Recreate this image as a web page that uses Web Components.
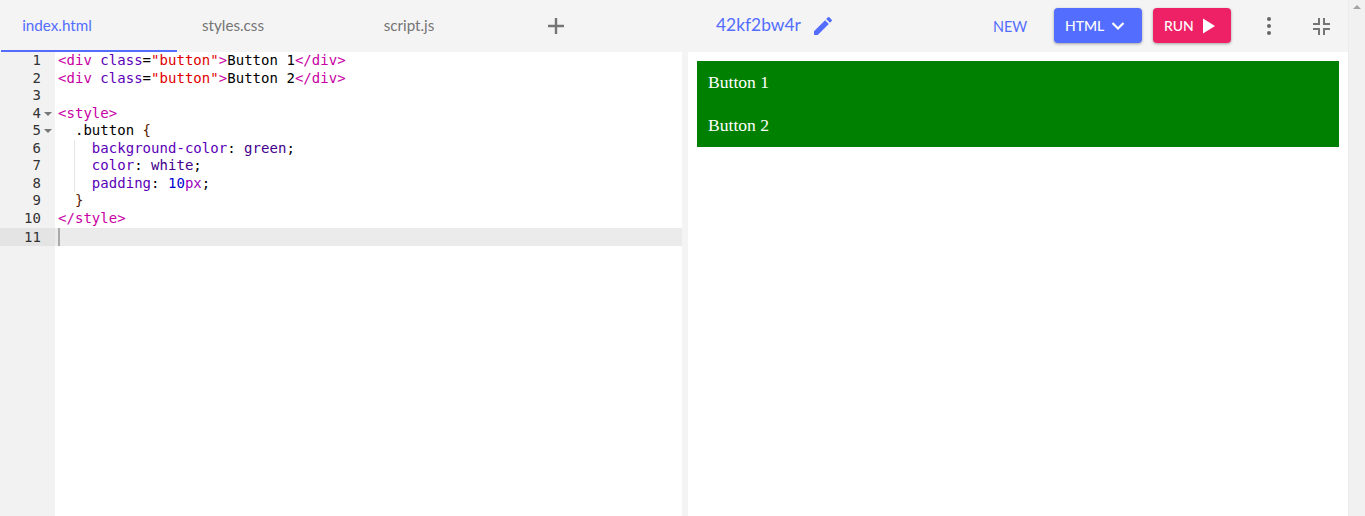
<!DOCTYPE html>
<html>
<head>
<meta charset="utf-8">
<style>
  html,body{margin:0;height:100%;overflow:hidden;background:#f4f4f4;}
</style>
</head>
<body>
<code-app></code-app>
<script>
class FileTab extends HTMLElement {
  constructor() {
    super();
    this.attachShadow({ mode: 'open' }).innerHTML = `
      <style>
        :host{display:flex;align-items:center;justify-content:center;width:176px;height:52px;box-sizing:border-box;
          font:15.2px Lato,sans-serif;color:#757575;padding:0 64px 2px 0;}
        :host([active]){color:#536dfe;border-bottom:2px solid #536dfe;padding-bottom:0;margin-left:1px;}
      </style>
      <slot></slot>`;
  }
}
customElements.define('file-tab', FileTab);

class TopBar extends HTMLElement {
  constructor() {
    super();
    this.attachShadow({ mode: 'open' }).innerHTML = `
      <style>
        :host{display:flex;align-items:center;height:52px;background:#f4f4f4;font-family:Lato,sans-serif;}
        svg{display:block;}
        .tabs{display:flex;width:536px;}
        .add{margin-left:10px;width:20px;height:20px;}
        .title{display:flex;align-items:center;margin-left:150px;font-size:17.4px;color:#536dfe;gap:12px;width:277px;}
        .title span{margin-bottom:3px;}
        .new{font-size:14.4px;color:#536dfe;width:61px;}
        .btn{display:flex;align-items:center;height:35px;border-radius:4px;color:#fff;font-size:14px;font-weight:500;box-sizing:border-box;
          box-shadow:0 1px 3px rgba(0,0,0,.35);margin-bottom:1px;}
        .html{background:#536dfe;width:88px;padding-left:11px;gap:6px;margin-right:11px;}
        .run{background:#ee2166;width:78px;padding-left:11px;gap:8px;}
        .more{margin-left:36px;}
        .shrink{margin-left:42px;}
      </style>
      <div class="tabs">
        <file-tab active>index.html</file-tab>
        <file-tab>styles.css</file-tab>
        <file-tab>script.js</file-tab>
      </div>
      <svg class="add" viewBox="0 0 20 20"><path d="M8.8 2h2.4v6.8H18v2.4h-6.8V18H8.8v-6.800H2V8.800h6.800z" fill="#757575"/></svg>
      <div class="title"><span>42kf2bw4r</span>
        <svg width="20" height="20" viewBox="2 2 20 20"><path fill="#536dfe" d="M3 17.25V21h3.75L17.81 9.94l-3.75-3.75L3 17.25zM20.71 7.04a1 1 0 0 0 0-1.41l-2.34-2.34a1 1 0 0 0-1.41 0l-1.83 1.83 3.75 3.75 1.83-1.83z"/></svg>
      </div>
      <div class="new">NEW</div>
      <div class="btn html">HTML
        <svg width="16" height="16" viewBox="0 0 16 16"><path d="M2.500 5 8 10.500 13.500 5" fill="none" stroke="#fff" stroke-width="2.200"/></svg>
      </div>
      <div class="btn run">RUN
        <svg width="14" height="16" viewBox="0 0 14 16"><path d="M1 .500l12 7.500-12 7.500z" fill="#fff"/></svg>
      </div>
      <svg class="more" width="4" height="18" viewBox="0 0 4 18"><circle cx="2" cy="2" r="2" fill="#666"/><circle cx="2" cy="9" r="2" fill="#666"/><circle cx="2" cy="16" r="2" fill="#666"/></svg>
      <svg class="shrink" width="17" height="17" viewBox="0 0 17 17"><path fill="#757575" d="M0 5h5V0h2v7H0zM10 0h2v5h5v2h-7zM0 10h7v7H5v-5H0zM10 10h7v2h-5v5h-2z"/></svg>`;
  }
}
customElements.define('top-bar', TopBar);

const CODE = [
  '<i class="t">&lt;div</i> <i class="a">class</i>=<i class="s">"button"</i><i class="t">&gt;</i>Button 1<i class="t">&lt;/div&gt;</i>',
  '<i class="t">&lt;div</i> <i class="a">class</i>=<i class="s">"button"</i><i class="t">&gt;</i>Button 2<i class="t">&lt;/div&gt;</i>',
  '',
  '<i class="t">&lt;style&gt;</i>',
  '  .button <i class="b">{</i>',
  '<u></u>    <i class="a">background-color</i>: <i class="v">green</i>;',
  '<u></u>    <i class="a">color</i>: <i class="v">white</i>;',
  '<u></u>    <i class="a">padding</i>: <i class="n">10</i><i class="p">px</i>;',
  '  <i class="b">}</i>',
  '<i class="t">&lt;/style&gt;</i>',
  ''
];

class CodeEditor extends HTMLElement {
  constructor() {
    super();
    const rows = CODE.map((c, i) => {
      const fold = (i === 3 || i === 4) ? '<em></em>' : '';
      const active = i === 10 ? ' active' : '';
      return `<div class="row${active}"><div class="num">${i + 1}${fold}</div><div class="line">${c}${i === 10 ? '<b class="cursor"></b>' : ''}</div></div>`;
    }).join('');
    this.attachShadow({ mode: 'open' }).innerHTML = `
      <style>
        :host{display:flex;flex-direction:column;width:682px;background:#fff;position:relative;
          font:14px/17.5px "DejaVu Sans Mono",monospace;color:#000;letter-spacing:.03px;}
        .gutter{position:absolute;left:0;top:0;bottom:0;width:55px;background:#f2f2f2;}
        .rows{position:relative;}
        .row{display:flex;height:17.5px;}
        .row.active{background:#ebebeb;height:18px;margin-top:1px;line-height:18px;}
        .num{width:41px;padding-right:14px;text-align:right;flex:none;color:#333;position:relative;}
        .row.active .num{background:#e4e4e4;}
        em{position:absolute;left:44px;top:7px;border:4px solid transparent;border-top-color:#777;border-bottom:0;}
        .line{padding-left:3px;white-space:pre;position:relative;}
        i{font-style:normal;}
        .t{color:#c800a4;}
        .a{color:#5c00b8;}
        .s{color:#e00000;}
        .v{color:#44008a;}
        .n{color:#0000d0;}
        .p{color:#9c00c0;}
        .b{color:#5a1a00;}
        u{position:absolute;left:19px;top:0;bottom:0;border-left:1px solid #e6e6e6;}
        .cursor{display:inline-block;width:2px;height:18px;background:#aaa;vertical-align:top;}
      </style>
      <div class="gutter"></div>
      <div class="rows">${rows}</div>`;
  }
}
customElements.define('code-editor', CodeEditor);

class PreviewPane extends HTMLElement {
  constructor() {
    super();
    this.attachShadow({ mode: 'open' }).innerHTML = `
      <style>
        :host{display:block;width:660px;margin-left:6px;background:#fff;box-sizing:border-box;padding:9px 9px 0;
          font:17.6px "Liberation Serif",serif;}
        .button{background:green;color:#fff;padding:10px 11px;line-height:23px;}
      </style>
      <div class="button">Button 1</div>
      <div class="button">Button 2</div>`;
  }
}
customElements.define('preview-pane', PreviewPane);

class PageScrollbar extends HTMLElement {
  constructor() {
    super();
    this.attachShadow({ mode: 'open' }).innerHTML = `
      <style>
        :host{display:block;position:absolute;top:0;right:0;bottom:0;width:17px;background:#f1f1f1;box-sizing:border-box;border-left:1px solid #ececec;}
        .up{position:absolute;left:4px;top:5px;border:4px solid transparent;border-top:0;border-bottom:4px solid #a3a3a3;}
      </style>
      <div class="up"></div>`;
  }
}
customElements.define('page-scrollbar', PageScrollbar);

class CodeApp extends HTMLElement {
  constructor() {
    super();
    this.attachShadow({ mode: 'open' }).innerHTML = `
      <style>
        :host{display:flex;flex-direction:column;height:516px;width:1365px;padding-right:17px;box-sizing:border-box;position:relative;background:#f4f4f4;}
        .panes{display:flex;flex:1;min-height:0;}
      </style>
      <top-bar></top-bar>
      <div class="panes">
        <code-editor></code-editor>
        <preview-pane></preview-pane>
      </div>
      <page-scrollbar></page-scrollbar>`;
  }
}
customElements.define('code-app', CodeApp);
</script>
</body>
</html>
